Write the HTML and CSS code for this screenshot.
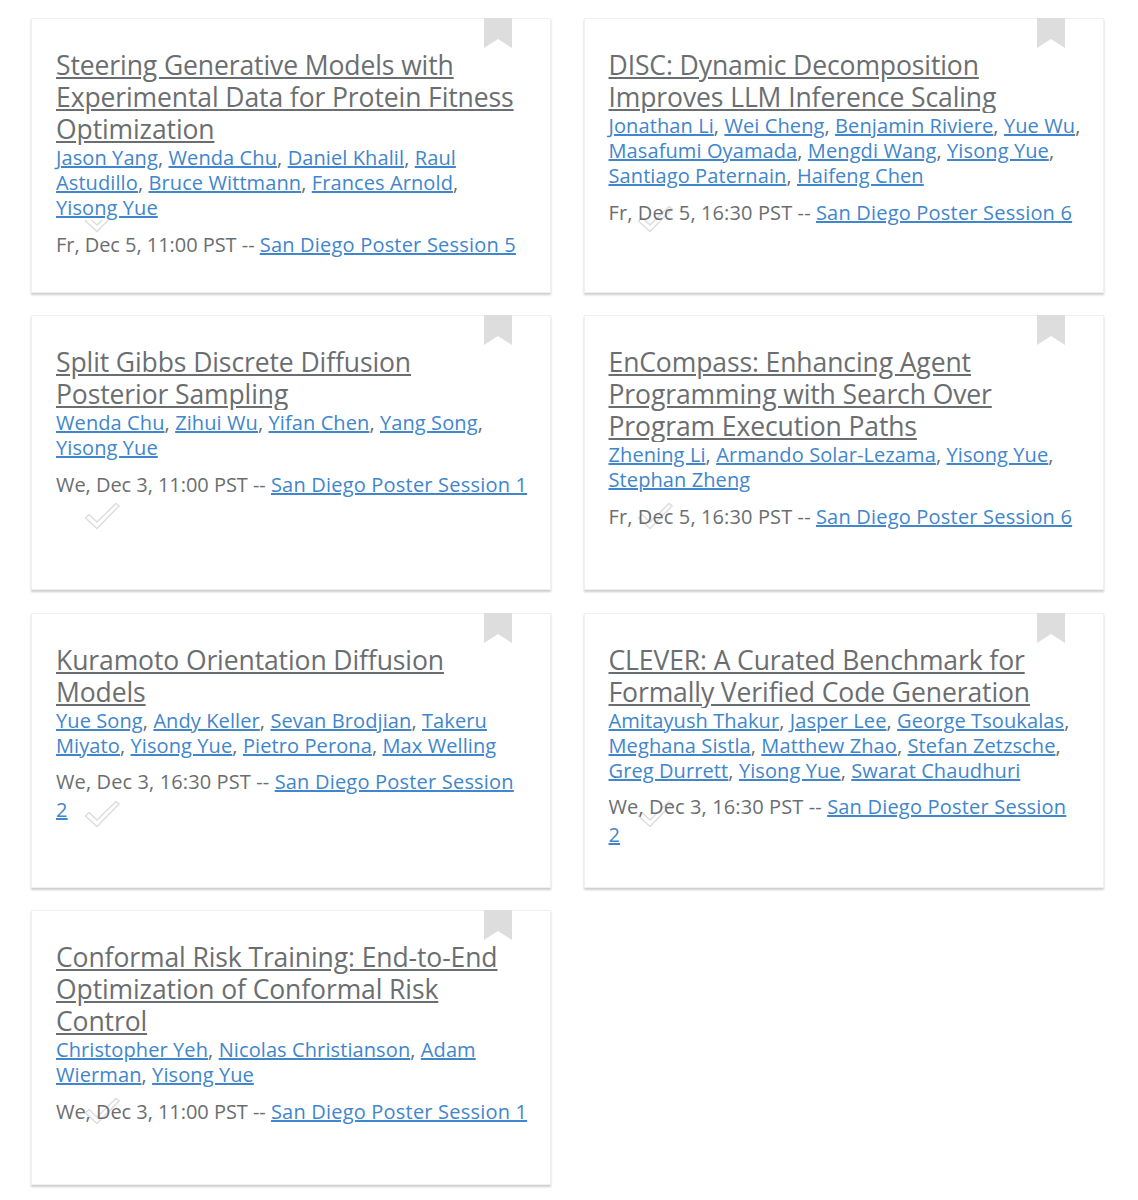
FILE: index.html
```html
<!DOCTYPE html>
<html lang="en">
<head>
    <meta charset="UTF-8">
    <meta name="viewport" content="width=device-width, initial-scale=1.0">
    <title>Papers</title>
    <link rel="stylesheet" href="styles.css">
</head>
<body>
    <main class="paper-grid">
        <article class="card">
            <svg class="bookmark" viewBox="0 0 28 30"><path d="M0 0H28V30L14 21L0 30Z"/></svg>
            <svg class="check" viewBox="0 0 36 28"><path d="M1.5 16L5 12.500L13 20L32 1.500L35 4L13 26.500Z"/></svg>
            <h3 class="title"><a href="#">Steering Generative Models with Experimental Data for Protein Fitness Optimization</a></h3>
            <p class="authors"><a href="#">Jason Yang</a>, <a href="#">Wenda Chu</a>, <a href="#">Daniel Khalil</a>, <a href="#">Raul Astudillo</a>, <a href="#">Bruce Wittmann</a>, <a href="#">Frances Arnold</a>, <a href="#" class="nowrap">Yisong Yue</a></p>
            <p class="session"><span class="when-narrow">Fr, Dec 5, 11:00 PST --</span> <a href="#">San Diego Poster Session 5</a></p>
        </article>
        <article class="card">
            <svg class="bookmark" viewBox="0 0 28 30"><path d="M0 0H28V30L14 21L0 30Z"/></svg>
            <svg class="check" viewBox="0 0 36 28"><path d="M1.5 16L5 12.500L13 20L32 1.500L35 4L13 26.500Z"/></svg>
            <h3 class="title"><a href="#">DISC: Dynamic Decomposition Improves LLM Inference Scaling</a></h3>
            <p class="authors"><a href="#">Jonathan Li</a>, <a href="#">Wei Cheng</a>, <a href="#">Benjamin Riviere</a>, <a href="#">Yue Wu</a>, <a href="#">Masafumi Oyamada</a>, <a href="#">Mengdi Wang</a>, <a href="#">Yisong Yue</a>, <a href="#">Santiago Paternain</a>, <a href="#">Haifeng Chen</a></p>
            <p class="session"><span class="when-wide">Fr, Dec 5, 16:30 PST --</span> <a href="#">San Diego Poster Session 6</a></p>
        </article>
        <article class="card">
            <svg class="bookmark" viewBox="0 0 28 30"><path d="M0 0H28V30L14 21L0 30Z"/></svg>
            <svg class="check" viewBox="0 0 36 28"><path d="M1.5 16L5 12.500L13 20L32 1.500L35 4L13 26.500Z"/></svg>
            <h3 class="title"><a href="#">Split Gibbs Discrete Diffusion Posterior Sampling</a></h3>
            <p class="authors"><a href="#">Wenda Chu</a>, <a href="#">Zihui Wu</a>, <a href="#">Yifan Chen</a>, <a href="#">Yang Song</a>, <a href="#">Yisong Yue</a></p>
            <p class="session"><span class="when-narrow">We, Dec 3, 11:00 PST --</span> <a href="#">San Diego Poster Session 1</a></p>
        </article>
        <article class="card">
            <svg class="bookmark" viewBox="0 0 28 30"><path d="M0 0H28V30L14 21L0 30Z"/></svg>
            <svg class="check" viewBox="0 0 36 28"><path d="M1.5 16L5 12.500L13 20L32 1.500L35 4L13 26.500Z"/></svg>
            <h3 class="title"><a href="#">EnCompass: Enhancing Agent Programming with Search Over Program Execution Paths</a></h3>
            <p class="authors"><a href="#">Zhening Li</a>, <a href="#">Armando Solar-Lezama</a>, <a href="#">Yisong Yue</a>, <a href="#">Stephan Zheng</a></p>
            <p class="session"><span class="when-wide">Fr, Dec 5, 16:30 PST --</span> <a href="#">San Diego Poster Session 6</a></p>
        </article>
        <article class="card">
            <svg class="bookmark" viewBox="0 0 28 30"><path d="M0 0H28V30L14 21L0 30Z"/></svg>
            <svg class="check" viewBox="0 0 36 28"><path d="M1.5 16L5 12.500L13 20L32 1.500L35 4L13 26.500Z"/></svg>
            <h3 class="title"><a href="#">Kuramoto Orientation Diffusion Models</a></h3>
            <p class="authors"><a href="#">Yue Song</a>, <a href="#">Andy Keller</a>, <a href="#">Sevan Brodjian</a>, <a href="#">Takeru Miyato</a>, <a href="#">Yisong Yue</a>, <a href="#">Pietro Perona</a>, <a href="#">Max Welling</a></p>
            <p class="session"><span class="when-wide">We, Dec 3, 16:30 PST --</span> <a href="#">San Diego Poster Session 2</a></p>
        </article>
        <article class="card">
            <svg class="bookmark" viewBox="0 0 28 30"><path d="M0 0H28V30L14 21L0 30Z"/></svg>
            <svg class="check" viewBox="0 0 36 28"><path d="M1.5 16L5 12.500L13 20L32 1.500L35 4L13 26.500Z"/></svg>
            <h3 class="title"><a href="#">CLEVER: A Curated Benchmark for Formally Verified Code Generation</a></h3>
            <p class="authors"><a href="#">Amitayush Thakur</a>, <a href="#">Jasper Lee</a>, <a href="#">George Tsoukalas</a>, <a href="#">Meghana Sistla</a>, <a href="#">Matthew Zhao</a>, <a href="#">Stefan Zetzsche</a>, <a href="#">Greg Durrett</a>, <a href="#">Yisong Yue</a>, <a href="#">Swarat Chaudhuri</a></p>
            <p class="session"><span class="when-wide">We, Dec 3, 16:30 PST --</span> <a href="#">San Diego Poster Session 2</a></p>
        </article>
        <article class="card">
            <svg class="bookmark" viewBox="0 0 28 30"><path d="M0 0H28V30L14 21L0 30Z"/></svg>
            <svg class="check" viewBox="0 0 36 28"><path d="M1.5 16L5 12.500L13 20L32 1.500L35 4L13 26.500Z"/></svg>
            <h3 class="title"><a href="#">Conformal Risk Training: End-to-End Optimization of Conformal Risk Control</a></h3>
            <p class="authors"><a href="#">Christopher Yeh</a>, <a href="#">Nicolas Christianson</a>, <a href="#">Adam Wierman</a>, <a href="#">Yisong Yue</a></p>
            <p class="session"><span class="when-narrow">We, Dec 3, 11:00 PST --</span> <a href="#">San Diego Poster Session 1</a></p>
        </article>
    </main>
</body>
</html>
```

FILE: styles.css
```css
* {
    margin: 0;
    padding: 0;
    box-sizing: border-box;
    font-family: "Open Sans", Arial, sans-serif;
}

body {
    background-color: #FFF;
    color: #6B6E70;
}

.paper-grid {
    display: grid;
    grid-template-columns: 520px 520px;
    grid-auto-rows: 275px;
    column-gap: 32.500px;
    row-gap: 22.300px;
    padding: 18px 0 14px 31px;
}

.card {
    position: relative;
    padding: 30px 22px 0 24px;
    background-color: #FFF;
    border: 1px solid #F0F0F0;
    box-shadow: 0 2px 2px rgba(0, 0, 0, 0.2);
}

.bookmark {
    position: absolute;
    top: -1px;
    right: 38px;
    width: 28px;
    height: 30px;
    fill: #DDD;
}

.check {
    position: absolute;
    top: 186px;
    left: 52px;
    width: 36px;
    height: 28px;
    fill: #FFF;
    stroke: #DDD;
    stroke-width: 1.500;
}

.title,
.authors,
.session {
    position: relative;
}

.title {
    font-size: 26.500px;
    font-weight: 400;
    line-height: 32px;
    letter-spacing: -0.100px;
}

.title a {
    color: #6B6E70;
}

.authors {
    background-color: #FFF;
    font-size: 20px;
    line-height: 25px;
    letter-spacing: 0.100px;
}

.authors a,
.session a {
    color: #3F86CC;
}

.nowrap {
    white-space: nowrap;
}

.session {
    margin-top: 10.700px;
    font-size: 20px;
    line-height: 28px;
}

.session a {
    letter-spacing: 0.200px;
}

.when-narrow {
    letter-spacing: -0.040px;
}

.when-wide {
    letter-spacing: 0.120px;
}
```
